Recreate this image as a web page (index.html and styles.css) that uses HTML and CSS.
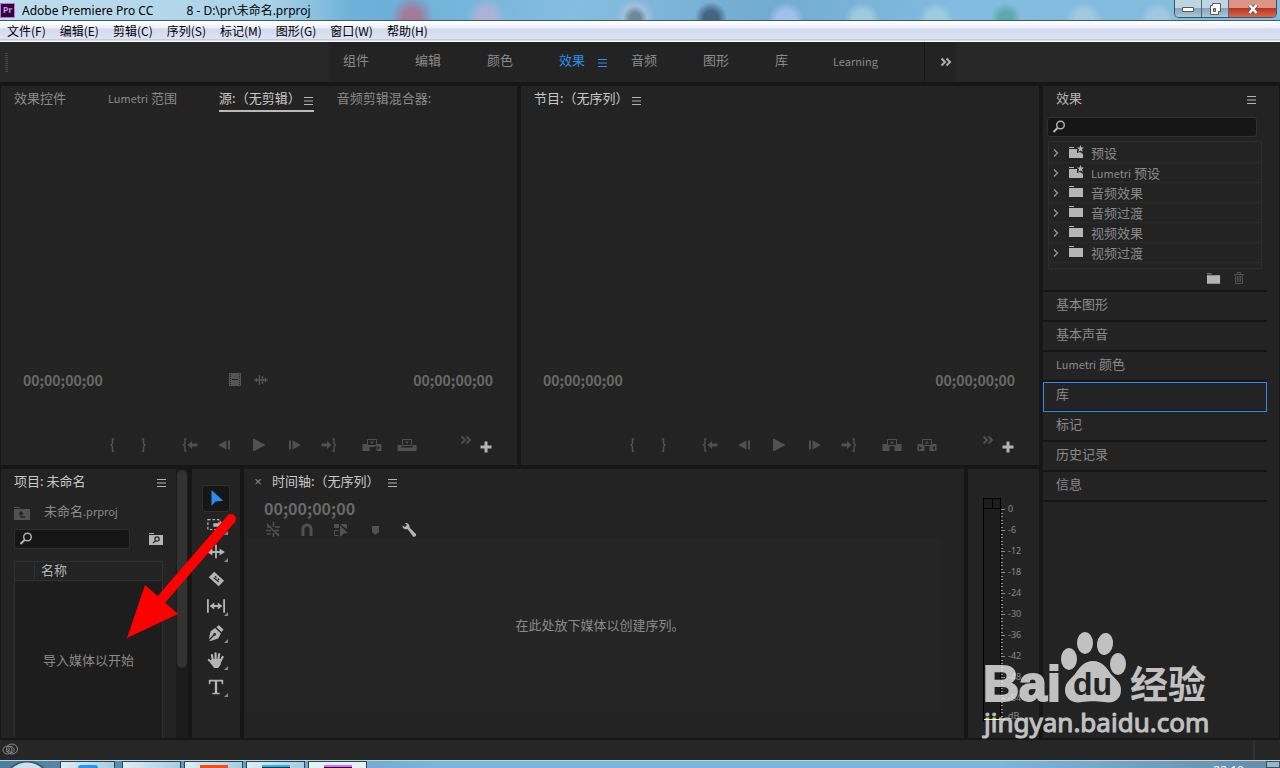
FILE: index.html
```html
<!DOCTYPE html>
<html lang="zh-Hans">
<head>
  <meta charset="UTF-8">
  <title>Adobe Premiere Pro CC</title>
  <link rel="stylesheet" href="styles.css">
</head>
<body>
  <svg class="sprite" aria-hidden="true">
    <symbol id="i-menu" viewBox="0 0 10 8"><path d="M0 .5h9M0 4h9M0 7.5h9" stroke="currentColor"/></symbol>
    <symbol id="i-more" viewBox="0 0 12 10"><path d="M1.5 1.5L5 5 1.5 8.500M6.500 1.500L10 5l-3.500 3.500" fill="none" stroke="currentColor" stroke-width="2"/></symbol>
    <symbol id="i-search" viewBox="0 0 14 14"><circle cx="8.5" cy="5" r="3.8" fill="none" stroke="currentColor" stroke-width="1.4"/><path d="M5.5 8l-4 4" stroke="currentColor" stroke-width="2"/></symbol>
    <symbol id="i-chev" viewBox="0 0 6 10"><path d="M1 1.500L4.500 5 1 8.500" fill="none" stroke="currentColor" stroke-width="1.3"/></symbol>
    <symbol id="i-folder" viewBox="0 0 15 12"><path d="M0 0h5v1H0zM0 2h14v9H0z" fill="currentColor"/></symbol>
    <symbol id="i-preset" viewBox="0 0 15 14"><path d="M0 2h5v1H0zM0 4h8v4l3-1 3 2v4H0z" fill="currentColor"/><path d="M11.500 0l1 2.500h2.500l-2 1.800.8 2.700-2.300-1.500L9.200 7l.8-2.700-2-1.800h2.500z" fill="currentColor"/></symbol>
    <symbol id="i-trash" viewBox="0 0 12 14"><path d="M1 2.500h10M4.500 2V.5h3V2M2.500 3v8.500h7V3M4.500 4v6M6 4v6M7.500 4v6" fill="none" stroke="currentColor"/></symbol>
    <symbol id="i-film" viewBox="0 0 12 14"><path d="M0 0h12v13H0z" fill="currentColor"/><path d="M1.500 1v12M10.500 1v12" stroke="#232323" stroke-dasharray="1 1"/><path d="M3 6.500h6" stroke="#232323"/></symbol>
    <symbol id="i-wave" viewBox="0 0 14 10"><path d="M0 5h14M2.500 3v4M5.500 0v10M8.500 1v8M11.500 3v4" stroke="currentColor" stroke-width="1.3"/></symbol>
    <symbol id="i-in" viewBox="0 0 20 14"><path d="M12 1h-1.500v4.500L9 7l1.500 1.500V13H12" fill="none" stroke="currentColor" stroke-width="1.5"/></symbol>
    <symbol id="i-out" viewBox="0 0 20 14"><path d="M8 1h1.500v4.500L11 7 9.500 8.500V13H8" fill="none" stroke="currentColor" stroke-width="1.5"/></symbol>
    <symbol id="i-goin" viewBox="0 0 20 14"><path d="M6.500 1H5v4.500L3.500 7 5 8.500V13h1.500" fill="none" stroke="currentColor" stroke-width="1.5"/><path d="M7.500 7L12 3v2.500h5.500v3H12V11z" fill="currentColor"/></symbol>
    <symbol id="i-goout" viewBox="0 0 20 14"><path d="M12.500 1H14v4.500L15.500 7 14 8.500V13h-1.500" fill="none" stroke="currentColor" stroke-width="1.5"/><path d="M11.500 7L7 3v2.500H1.500v3H7V11z" fill="currentColor"/></symbol>
    <symbol id="i-back" viewBox="0 0 20 14"><path d="M3 7l8.500-4.500v9zM13 2.500h2v9h-2z" fill="currentColor"/></symbol>
    <symbol id="i-fwd" viewBox="0 0 20 14"><path d="M16 7L7.500 2.500v9zM4 2.500h2v9H4z" fill="currentColor"/></symbol>
    <symbol id="i-play" viewBox="0 0 20 14"><path d="M3 1h1.500L15.500 7 4.500 13H3z" fill="currentColor"/></symbol>
    <symbol id="i-insert" viewBox="0 0 20 14"><path d="M.5 6h5v2h2v5h-7zM14.500 6h5v7h-5V8z" fill="currentColor"/><path d="M5.500 1.500h9v6h-9z" fill="none" stroke="currentColor"/><path d="M8 3.500h4L10 6zM7 8h6v1H7z" fill="currentColor"/><path d="M15.500 8v3.500l2.500-1.800z" fill="#232323"/></symbol>
    <symbol id="i-over" viewBox="0 0 20 14"><path d="M.5 7h4v2.500h11V7h4v6H.5z" fill="currentColor"/><path d="M5.500 1.500h9v6h-9z" fill="none" stroke="currentColor"/><path d="M8 3.500h4L10 6z" fill="currentColor"/></symbol>
    <symbol id="i-lift" viewBox="0 0 20 14"><path d="M.5 6h5v2h2v5h-7zM14.500 6h5v7h-7V8h2z" fill="currentColor"/><path d="M5.500 1.500h9v6h-9z" fill="none" stroke="currentColor"/><path d="M8 5.500h4L10 3z" fill="currentColor"/></symbol>
    <symbol id="i-extract" viewBox="0 0 20 14"><path d="M.5 6h5v2h2v5h-7zM14.500 6h5v7h-7V8h2z" fill="currentColor"/><path d="M5.500 1.500h9v6h-9z" fill="none" stroke="currentColor"/><path d="M8 5.500h4L10 3z" fill="currentColor"/><path d="M2 8v4l3-2zM18 8v4l-3-2z" fill="#232323"/></symbol>
    <symbol id="i-plus" viewBox="0 0 12 12"><path d="M6 .5v11M.5 6h11" stroke="currentColor" stroke-width="3"/></symbol>
    <symbol id="i-up" viewBox="0 0 16 13"><path d="M0 0h6v1H0zM0 2h16v11H0z" fill="currentColor"/><path d="M7 5v5h4M5 7.500L7 5l2 2.500" fill="none" stroke="#232323" stroke-width="1.3"/></symbol>
    <symbol id="i-find" viewBox="0 0 14 12"><path d="M0 0h5v1H0zM0 2h14v10H0z" fill="currentColor"/><circle cx="8" cy="6" r="2.2" fill="none" stroke="#232323" stroke-width="1.2"/><path d="M6.500 8L4 10" stroke="#232323" stroke-width="1.3"/></symbol>
    <symbol id="t-select" viewBox="0 0 20 20"><path d="M5 1v18l4.500-5 8.500-1z" fill="#2d8ceb"/></symbol>
    <symbol id="t-track" viewBox="0 0 20 20"><path d="M1 4h12v11H1z" fill="none" stroke="currentColor" stroke-width="1.3" stroke-dasharray="3 2"/><path d="M7 8h7V5l6 5-6 5v-3H7z" fill="currentColor"/></symbol>
    <symbol id="t-ripple" viewBox="0 0 20 20"><path d="M10 2v15" stroke="currentColor" stroke-width="2"/><path d="M0 10l6-4v3h8V6l6 4-6 4v-3H6v3z" fill="currentColor"/></symbol>
    <symbol id="t-razor" viewBox="0 0 20 20"><path d="M8 2l11 10-6 6L2 8z" fill="currentColor"/><path d="M7.500 8.500l5.500 4.500M9 7l1.500 1.500M12 9.500l1.500 1.500" stroke="#232323" stroke-width="1.4"/></symbol>
    <symbol id="t-slip" viewBox="0 0 20 20"><path d="M1 2.500v15M19 2.500v15M5 10h10" stroke="currentColor" stroke-width="2"/><path d="M3 10l5-4v8zM17 10l-5-4v8z" fill="currentColor"/></symbol>
    <symbol id="t-pen" viewBox="0 0 20 20"><path d="M13 1l5.500 5.500L16 9l-5.500-5.500zM9 4.500l6.500 6L12.500 16 4 19l-1.500-.5L8 13a1.500 1.500 0 1 0-1-1l-5 5L4 8z" fill="currentColor"/></symbol>
    <symbol id="t-hand" viewBox="0 0 20 20"><path d="M6.500 11l-1-6.500M9.500 10V2.500M12.500 10l1-6.500M15 11l2.500-4.500M7 14l-5-4" fill="none" stroke="currentColor" stroke-width="2.4" stroke-linecap="round"/><path d="M5.400 9h10.800l-1 6-2.700 4H8l-4.500-6z" fill="currentColor"/></symbol>
    <symbol id="t-type" viewBox="0 0 20 20"><path d="M2 2h16v5h-1.500L16 4h-4.700v12.500H14V18H6v-1.500h2.700V4H4l-.5 3H2z" fill="currentColor"/></symbol>
    <symbol id="l-nest" viewBox="0 0 16 16"><path d="M2 2l12 12M8.500 0v5M2 5h4M10 5h5M1 8.500h5M10 8.500h4M2 12h4M11 12h3M8.500 11v4" stroke="currentColor" stroke-width="1.5"/></symbol>
    <symbol id="l-snap" viewBox="0 0 16 16"><path d="M4 14V7a4 4 0 0 1 8 0v7" fill="none" stroke="currentColor" stroke-width="3"/></symbol>
    <symbol id="l-link" viewBox="0 0 16 16"><path d="M1 2h5v4H1zM8 2h6v5L8 3zM7 3.500L15 11l-4 .5L7 15z" fill="currentColor"/><path d="M5.500 8.500h-4v5h4" fill="none" stroke="currentColor"/></symbol>
    <symbol id="l-mark" viewBox="0 0 16 16"><path d="M5 4h7v6l-3.500 3L5 10z" fill="currentColor"/></symbol>
    <symbol id="l-wrench" viewBox="0 0 16 16"><path d="M4 1l2 2-2 2-2.500-1.500C1 6 4 8 6.500 7l6 8L15 14v-2L8.500 5.500C9 2.500 6.500.5 4 1z" fill="currentColor"/></symbol>
  </svg>

  <header class="titlebar">
    <span class="app-icon">Pr</span>
    <h1>Adobe Premiere Pro CC <span class="doc">8 - D:\pr\未命名.prproj</span></h1>
    <div class="win-buttons">
      <button aria-label="最小化"><svg width="14" height="12"><path d="M1.500 4.500h11v4h-11z" fill="#fff" stroke="#52586b"/></svg></button>
      <button aria-label="还原"><svg width="14" height="14"><path d="M4.500 1.500h8v8h-2v3h-8v-9h2z" fill="#fff" stroke="#52586b"/><path d="M5.500 6.500h2v3h-2z" fill="#8fb0c8" stroke="#52586b"/></svg></button>
      <button class="close" aria-label="关闭"><svg width="14" height="12"><path d="M3.500 2l7 8M10.500 2l-7 8" stroke="#52586b" stroke-width="4"/><path d="M3.500 2l7 8M10.500 2l-7 8" stroke="#fff" stroke-width="2.5"/></svg></button>
    </div>
  </header>

  <nav class="menubar">
    <a href="#">文件(F)</a><a href="#">编辑(E)</a><a href="#">剪辑(C)</a><a href="#">序列(S)</a><a href="#">标记(M)</a><a href="#">图形(G)</a><a href="#">窗口(W)</a><a href="#">帮助(H)</a>
  </nav>

  <nav class="workspaces">
    <span class="grip"></span>
    <div class="ws-list">
      <button>组件</button>
      <button>编辑</button>
      <button>颜色</button>
      <button class="on">效果 <svg class="burger"><use href="#i-menu"/></svg></button>
      <button>音频</button>
      <button>图形</button>
      <button>库</button>
      <button class="latin">Learning</button>
    </div>
    <button class="ws-more" aria-label="更多"><svg width="12" height="10"><use href="#i-more"/></svg></button>
  </nav>

  <main>
    <div class="work">
      <div class="monitors">
        <section class="panel monitor">
          <div class="tabs">
            <button>效果控件</button>
            <button><small>Lumetri</small> 范围</button>
            <button class="on underline">源:（无剪辑）<svg class="burger"><use href="#i-menu"/></svg></button>
            <button>音频剪辑混合器:</button>
          </div>
          <div class="times">
            <span class="timecode">00;00;00;00</span>
            <span class="media"><svg width="12" height="14"><use href="#i-film"/></svg><svg width="14" height="10"><use href="#i-wave"/></svg></span>
            <span class="timecode">00;00;00;00</span>
          </div>
          <div class="transport">
            <div class="marks">
              <button aria-label="标记入点"><svg><use href="#i-in"/></svg></button>
              <button aria-label="标记出点"><svg><use href="#i-out"/></svg></button>
            </div>
            <div class="play">
              <button aria-label="转到入点"><svg><use href="#i-goin"/></svg></button>
              <button aria-label="后退一帧"><svg><use href="#i-back"/></svg></button>
              <button aria-label="播放"><svg><use href="#i-play"/></svg></button>
              <button aria-label="前进一帧"><svg><use href="#i-fwd"/></svg></button>
              <button aria-label="转到出点"><svg><use href="#i-goout"/></svg></button>
            </div>
            <div class="edit">
              <button aria-label="插入"><svg><use href="#i-insert"/></svg></button>
              <button aria-label="覆盖"><svg><use href="#i-over"/></svg></button>
            </div>
            <div class="extra">
              <button class="more" aria-label="更多"><svg><use href="#i-more"/></svg></button>
              <button class="add" aria-label="按钮编辑器"><svg><use href="#i-plus"/></svg></button>
            </div>
          </div>
        </section>

        <section class="panel monitor">
          <div class="tabs">
            <button class="on">节目:（无序列）<svg class="burger"><use href="#i-menu"/></svg></button>
          </div>
          <div class="times">
            <span class="timecode">00;00;00;00</span>
            <span class="timecode">00;00;00;00</span>
          </div>
          <div class="transport">
            <div class="marks">
              <button aria-label="标记入点"><svg><use href="#i-in"/></svg></button>
              <button aria-label="标记出点"><svg><use href="#i-out"/></svg></button>
            </div>
            <div class="play">
              <button aria-label="转到入点"><svg><use href="#i-goin"/></svg></button>
              <button aria-label="后退一帧"><svg><use href="#i-back"/></svg></button>
              <button aria-label="播放"><svg><use href="#i-play"/></svg></button>
              <button aria-label="前进一帧"><svg><use href="#i-fwd"/></svg></button>
              <button aria-label="转到出点"><svg><use href="#i-goout"/></svg></button>
            </div>
            <div class="edit">
              <button aria-label="提升"><svg><use href="#i-lift"/></svg></button>
              <button aria-label="提取"><svg><use href="#i-extract"/></svg></button>
            </div>
            <div class="extra">
              <button class="more" aria-label="更多"><svg><use href="#i-more"/></svg></button>
              <button class="add" aria-label="按钮编辑器"><svg><use href="#i-plus"/></svg></button>
            </div>
          </div>
        </section>
      </div>

      <div class="bottom">
        <section class="panel project">
          <div class="project-body">
            <div class="panel-head"><h2>项目: 未命名</h2><svg class="burger"><use href="#i-menu"/></svg></div>
            <div class="file"><svg width="16" height="13"><use href="#i-up"/></svg><span>未命名<small>.prproj</small></span></div>
            <div class="find">
              <label class="search"><svg><use href="#i-search"/></svg><input type="text" aria-label="搜索素材箱"></label>
              <svg width="14" height="12"><use href="#i-find"/></svg>
            </div>
            <table class="bin">
              <thead><tr><th class="tag"></th><th>名称</th></tr></thead>
              <tbody><tr><td colspan="2">导入媒体以开始</td></tr></tbody>
            </table>
          </div>
          <div class="scroll"><div class="thumb"></div></div>
        </section>

        <section class="panel tools">
          <button class="on" aria-label="选择工具"><svg><use href="#t-select"/></svg></button>
          <button class="sub" aria-label="轨道选择"><svg><use href="#t-track"/></svg></button>
          <button class="sub" aria-label="波纹编辑"><svg><use href="#t-ripple"/></svg></button>
          <button aria-label="剃刀"><svg><use href="#t-razor"/></svg></button>
          <button class="sub" aria-label="外滑"><svg><use href="#t-slip"/></svg></button>
          <button class="sub" aria-label="钢笔"><svg><use href="#t-pen"/></svg></button>
          <button class="sub" aria-label="手形"><svg><use href="#t-hand"/></svg></button>
          <button class="sub" aria-label="文字"><svg><use href="#t-type"/></svg></button>
        </section>

        <section class="panel timeline">
          <div class="tl-head"><button class="x" aria-label="关闭">×</button><h2>时间轴:（无序列）</h2><svg class="burger"><use href="#i-menu"/></svg></div>
          <div class="timecode big">00;00;00;00</div>
          <div class="tl-tools">
            <button aria-label="嵌套"><svg><use href="#l-nest"/></svg></button>
            <button aria-label="对齐"><svg><use href="#l-snap"/></svg></button>
            <button aria-label="链接选择"><svg><use href="#l-link"/></svg></button>
            <button aria-label="添加标记"><svg><use href="#l-mark"/></svg></button>
            <button class="lit" aria-label="显示设置"><svg><use href="#l-wrench"/></svg></button>
          </div>
          <div class="drop">在此处放下媒体以创建序列。</div>
        </section>

        <section class="panel meter">
          <div class="bar"><i></i></div>
          <svg class="ticks" width="4" height="214">
            <defs><pattern id="tick" width="4" height="21" patternUnits="userSpaceOnUse"><path d="M0 .5h4M0 4.500h2M0 7.500h2M0 11.500h2M0 14.500h2M0 18.500h2" stroke="#8a8a8a"/></pattern></defs>
            <rect width="4" height="214" fill="url(#tick)"/>
          </svg>
          <ul>
            <li>0</li><li>-6</li><li>-12</li><li>-18</li><li>-24</li><li>-30</li><li>-36</li><li>-42</li><li>-48</li><li>-54</li><li class="db">dB</li>
          </ul>
        </section>
      </div>
    </div>

    <aside class="panel side">
      <div class="panel-head"><h2>效果</h2><svg class="burger"><use href="#i-menu"/></svg></div>
      <label class="search"><svg><use href="#i-search"/></svg><input type="text" aria-label="搜索效果"></label>
      <ul class="tree">
        <li><svg class="chev"><use href="#i-chev"/></svg><svg class="ico"><use href="#i-preset"/></svg>预设</li>
        <li><svg class="chev"><use href="#i-chev"/></svg><svg class="ico"><use href="#i-preset"/></svg><span><small>Lumetri</small> 预设</span></li>
        <li><svg class="chev"><use href="#i-chev"/></svg><svg class="ico"><use href="#i-folder"/></svg>音频效果</li>
        <li><svg class="chev"><use href="#i-chev"/></svg><svg class="ico"><use href="#i-folder"/></svg>音频过渡</li>
        <li><svg class="chev"><use href="#i-chev"/></svg><svg class="ico"><use href="#i-folder"/></svg>视频效果</li>
        <li><svg class="chev"><use href="#i-chev"/></svg><svg class="ico"><use href="#i-folder"/></svg>视频过渡</li>
      </ul>
      <div class="tree-foot">
        <button aria-label="新建文件夹"><svg width="14" height="12"><use href="#i-folder"/></svg></button>
        <button class="off" aria-label="删除"><svg width="12" height="14"><use href="#i-trash"/></svg></button>
      </div>
      <div class="stack">
        <button>基本图形</button>
        <button>基本声音</button>
        <button><small>Lumetri</small> 颜色</button>
        <button class="focus">库</button>
        <button>标记</button>
        <button>历史记录</button>
        <button>信息</button>
      </div>
    </aside>
  </main>

  <footer class="status">
    <svg width="17" height="14" viewBox="0 0 17 14" fill="none" stroke="#8a8a8a"><ellipse cx="5.5" cy="8" rx="4.500" ry="4"/><ellipse cx="10" cy="7" rx="5.500" ry="5"/><path d="M4 9.500c2 1 4-1 3-3s2-3 4-1 1 5-1 5-3-2-4.500-3"/></svg>
  </footer>

  <div class="taskbar">
    <span class="start"></span>
    <button aria-label="浏览器"><i class="blue"></i></button>
    <button aria-label="资源管理器"></button>
    <button aria-label="WPS"><i class="orange"></i></button>
    <button aria-label="应用"><i class="cyan"></i></button>
    <button class="active" aria-label="Premiere Pro"><i class="pink"></i></button>
    <time>22:10</time>
    <span class="desk"></span>
  </div>

  <svg class="arrow" width="112" height="130" viewBox="0 0 112 130" aria-hidden="true"><path d="M105 9L34 91" stroke="red" stroke-width="10" stroke-linecap="round"/><path d="M1 128l18-53 33 29z" fill="red"/></svg>

  <svg class="watermark" width="236" height="116" viewBox="0 0 236 116" aria-label="Baidu 经验">
    <g fill="#fff" opacity=".72">
      <text class="bai" x="3" y="71">Bai</text>
      <ellipse cx="89" cy="29" rx="8" ry="11"/>
      <ellipse cx="105" cy="13" rx="8" ry="11"/>
      <ellipse cx="125" cy="14" rx="8" ry="11" transform="rotate(8 125 14)"/>
      <ellipse cx="138" cy="34" rx="8" ry="11"/>
      <path d="M113 31c9 0 14 7 18 13 4 5 10 8 10 16 0 10-8 14-17 12-8-1-14-1-22 0-9 2-17-3-17-12 0-8 6-11 10-16 4-6 9-13 18-13z"/>
      <text class="jy" x="150" y="68">经验</text>
      <text class="url" x="4" y="102">jingyan.baidu.com</text>
    </g>
    <text class="du" x="93" y="65">du</text>
  </svg>
</body>
</html>
```
FILE: styles.css
```css
* { box-sizing: border-box; }

body {
  margin: 0;
  height: 100vh;
  overflow: hidden;
  position: relative;
  display: flex;
  flex-direction: column;
  background: #161616;
  color: #8a8a8a;
  font: 13px/20px "Noto Sans CJK SC", sans-serif;
}

h1, h2, ul { margin: 0; padding: 0; font-size: 13px; font-weight: 400; }
ul { list-style: none; }
button {
  border: 0;
  padding: 0;
  background: none;
  color: inherit;
  font: inherit;
  white-space: nowrap;
}
small { font-size: 11px; }
svg { flex: none; }
.sprite { position: absolute; width: 0; height: 0; }
.burger { width: 10px; height: 8px; color: #b4b4b4; }

/* window frame */
.titlebar {
  flex: none;
  height: 21px;
  display: flex;
  align-items: flex-start;
  border-bottom: 1px solid #44586a;
  color: #000;
  background:
    linear-gradient(90deg, rgba(205,230,242,.75) 0, rgba(205,230,242,.6) 270px, transparent 350px),
    radial-gradient(circle at 412px 18px, rgba(184,98,126,.7) 8px, transparent 22px),
    radial-gradient(circle at 486px 18px, rgba(183,176,214,.8) 9px, transparent 20px),
    radial-gradient(circle at 635px 18px, #6f8799 5px, #a0bfe0 12px, transparent 20px),
    radial-gradient(circle at 711px 18px, rgba(54,82,106,.8) 7px, transparent 16px),
    radial-gradient(circle at 786px 20px, rgba(165,195,238,.9) 9px, transparent 18px),
    radial-gradient(circle at 862px 20px, rgba(169,208,224,.8) 9px, transparent 18px),
    radial-gradient(circle at 936px 20px, rgba(165,208,220,.8) 9px, transparent 18px),
    radial-gradient(circle at 1006px 18px, rgba(80,165,155,.8) 6px, transparent 15px),
    radial-gradient(circle at 1084px 20px, rgba(170,203,226,.8) 9px, transparent 18px),
    radial-gradient(circle at 1158px 20px, rgba(170,203,226,.8) 9px, transparent 18px),
    linear-gradient(100deg, #8fc0dc, #6cb0d8 30%, #85bde0 45%, #72abd0 60%, #82bce0 75%, #84bcdc);
}
.app-icon {
  width: 15px;
  height: 15px;
  margin: 3px 7px 0 0;
  border: 1px solid #c86ee0;
  background: #2a0634;
  color: #dd83f5;
  font: bold 9px/12px "Open Sans", sans-serif;
  text-align: center;
}
.titlebar h1 { font: 12px/22px "Noto Sans", "Noto Sans CJK SC", sans-serif; height: 20px; flex: 1; }
.titlebar .doc { margin-left: 30px; }
.win-buttons {
  display: flex;
  height: 18px;
  margin-right: 3px;
  border: 1px solid #3f5061;
  border-top: 0;
  border-radius: 0 0 5px 5px;
  overflow: hidden;
}
.win-buttons button {
  width: 27px;
  display: flex;
  justify-content: center;
  align-items: center;
  border-right: 1px solid #50667a;
  background: linear-gradient(#c0d5e2 45%, #86a5ba 50%, #a9c8d8);
}
.win-buttons .close { width: 47px; border: 0; background: linear-gradient(#dc9484 45%, #bb3620 50%, #d9654a); }

.menubar {
  flex: none;
  height: 21px;
  display: flex;
  gap: 14px;
  padding-left: 7px;
  background: linear-gradient(#fff, #eceff8 7px, #d3daed 8px, #dee3f5 18px, #b0b5ca 19px, #fff 20px);
}
.menubar a { color: #000; text-decoration: none; font-size: 12px; line-height: 20px; }

.workspaces {
  flex: none;
  height: 40px;
  display: flex;
  align-items: center;
  background: #272727;
}
.grip {
  width: 3px;
  height: 19px;
  margin-left: 5px;
  background: repeating-linear-gradient(#484848 0 1px, transparent 1px 2px);
}
.ws-list {
  display: flex;
  width: 595px;
  height: 40px;
  margin-left: 322px;
  padding-left: 13px;
  background: #232323;
  border-right: 1px solid #161616;
}
.ws-list button { width: 72px; text-align: left; padding-bottom: 4px; font-size: 13px; }
.ws-list .latin { font-size: 11px; width: 56px; padding-bottom: 3px; margin-left: -14px; }
.ws-list .on { color: #2d8ceb; }
.ws-list .burger { color: #2d8ceb; margin-left: 10px; vertical-align: -2px; }
.ws-more { height: 40px; width: 30px; padding: 0 0 0 12px; background: #232323; color: #b0b0b0; }

/* panels */
main { flex: 1; min-height: 0; display: flex; gap: 4px; padding: 4px 1px 2px; }
.work { flex: 1; min-width: 0; display: flex; flex-direction: column; gap: 4px; }
.monitors { flex: 379 1 0; display: grid; grid-template-columns: 516fr 518fr; gap: 4px; min-height: 0; }
.bottom { flex: 269 1 0; display: grid; grid-template-columns: 187px 48px 1fr 71px; gap: 4px; min-height: 0; }
.panel { background: #232323; min-width: 0; min-height: 0; }
.panel-head { display: flex; justify-content: space-between; align-items: center; color: #b4b4b4; }

.monitor { display: flex; flex-direction: column; }
.tabs { display: flex; flex: 1; align-items: flex-start; padding: 2px 13px; }
.tabs button { height: 24px; line-height: 20px; padding-bottom: 4px; margin-right: 23px; border-bottom: 0 solid #b9b9b9; }
.tabs button:first-child, .tabs button:nth-child(2) { margin-right: 42px; }
.tabs .on { color: #c8c8c8; }
.tabs .underline { padding-bottom: 2px; border-bottom-width: 2px; }
.tabs .burger { margin-left: 3px; vertical-align: -2px; }
.times { display: flex; justify-content: space-between; align-items: center; padding: 0 24px 0 22px; }
.timecode { font-size: 14px; font-weight: 700; color: #686868; }
.timecode.big { font-size: 16px; padding: 3px 0 0 20px; line-height: 24px; }
.media { display: flex; align-items: center; gap: 13px; margin-right: 20px; color: #555; }

.transport { display: flex; align-items: center; height: 40px; margin: 35px 0 0; padding: 0 25px 0 95px; color: #505050; }
.transport > div { display: flex; }
.transport button { width: 35px; height: 20px; display: flex; justify-content: center; align-items: center; }
.transport .marks button { width: 32px; }
.transport .play { margin-left: 12px; }
.transport .edit { margin-left: 7px; }
.transport svg { width: 20px; height: 14px; }
.transport .extra { margin-left: auto; align-items: flex-start; gap: 8px; margin-top: -4px; }
.transport .extra button { width: 12px; height: 12px; }
.transport .extra svg { width: 12px; height: 10px; }
.transport .extra .add { color: #b4b4b4; margin-top: 7px; }
.transport .add svg { height: 12px; }

.project { display: flex; justify-content: space-between; }
.project-body { width: 149px; margin-left: 13px; display: flex; flex-direction: column; }
.project .panel-head { padding: 2px 0; }
.project .panel-head h2 { color: #c8c8c8; }
.project .burger { margin: 4px -4px 0 0; }
.file { display: flex; align-items: center; gap: 14px; margin: 8px 0; color: #8a8a8a; }
.file svg { color: #515151; margin-top: 4px; }
.find { display: flex; justify-content: space-between; align-items: center; color: #b4b4b4; }
.find .search { width: 116px; }
.search {
  display: flex;
  align-items: center;
  height: 20px;
  padding-left: 4px;
  border: 1px solid #303030;
  border-radius: 3px;
  background: #161616;
  color: #b4b4b4;
}
.search svg { width: 14px; height: 14px; }
.search input { flex: 1; min-width: 0; border: 0; background: none; color: #c8c8c8; outline: 0; }
.bin { flex: 1; display: flex; flex-direction: column; margin-top: 12px; border: 1px solid #303030; border-bottom: 0; background: #1d1d1d; }
.bin thead { background: #232323; border-bottom: 1px solid #303030; }
.bin thead tr { display: flex; height: 18px; }
.bin th { padding: 0 6px; font-weight: 400; color: #b4b4b4; line-height: 16px; }
.bin .tag { width: 20px; border-right: 1px solid #303030; }
.bin tbody, .bin tbody tr { flex: 1; display: flex; }
.bin td { flex: 1; display: flex; align-items: center; justify-content: center; padding: 0; }
.scroll { width: 12px; padding: 1px; background: #1b1b1b; }
.thumb { height: 74%; border-radius: 5px; background: #323232; }

.tools { display: flex; flex-direction: column; align-items: center; padding-top: 16px; color: #b4b4b4; }
.tools button { width: 28px; height: 27px; display: flex; align-items: center; justify-content: center; position: relative; border: 1px solid transparent; border-radius: 3px; padding-bottom: 2px; }
.tools svg { width: 18px; height: 18px; }
.tools .on { background: #161616; border-color: #303030; }
.tools .sub::after { content: ""; position: absolute; right: 1px; bottom: 3px; border: 2px solid; border-color: transparent #8a8a8a #8a8a8a transparent; }

.timeline { display: flex; flex-direction: column; }
.tl-head { display: flex; align-items: center; padding: 2px 10px; color: #c8c8c8; }
.tl-head .x { width: 8px; margin-right: 10px; padding-top: 2px; color: #8a8a8a; font: 13px/18px "Liberation Sans", sans-serif; }
.tl-head .burger { margin: 4px 0 0 8px; }
.tl-tools { display: flex; gap: 18px; padding: 2px 21px 0; color: #505050; }
.tl-tools button, .tl-tools svg { display: block; width: 16px; height: 16px; }
.tl-tools .lit { color: #b4b4b4; }
.drop { flex: 1; display: flex; align-items: center; justify-content: center; margin: 0 24px 26px 2px; padding-left: 14px; background: #252525; }

.meter { display: flex; padding: 29px 0 0 15px; }
.bar { width: 18px; height: 224px; border: 1px solid #000; border-bottom: 0; background: linear-gradient(#000, #000) 8px 0 / 1px 9px no-repeat, linear-gradient(#000, #000) 0 9px / 100% 1px no-repeat, #1d1d1d; display: flex; align-items: flex-end; }
.bar i { width: 16px; height: 1px; margin-bottom: 2px; background: #ffff30; }
.ticks { margin-top: 11px; }
.meter ul { padding-left: 3px; }
.meter li { height: 21px; font: 9px/22px "Noto Sans", sans-serif; }
.meter .db { margin-top: -3px; }

.side { width: 236px; }
.side .panel-head { padding: 2px 22px 0 13px; }
.side .burger { margin-top: 4px; }
.side .search { margin: 9px 22px 4px 4px; }
.tree { margin: 0 17px 0 5px; padding: 1px 0 5px; border: 1px solid #2e2e2e; }
.tree li { display: flex; align-items: center; height: 20px; border-bottom: 1px solid #2a2a2a; }
.tree .chev { width: 6px; height: 10px; margin: 0 10px 0 4px; color: #999; }
.tree .ico { width: 15px; height: 14px; margin: -2px 7px 0 0; color: #b4b4b4; }
.tree-foot { display: flex; justify-content: flex-end; align-items: center; height: 21px; padding-bottom: 1px; gap: 12px; padding-right: 34px; }
.tree-foot button { display: flex; color: #b4b4b4; }
.tree-foot .off { color: #505050; }
.stack { margin-right: 12px; border-bottom: 2px solid #161616; }
.stack button { display: block; width: 100%; height: 30px; padding: 0 13px 4px; border: 0 solid #161616; border-top-width: 2px; text-align: left; }
.stack .focus { position: relative; }
.stack .focus::after { content: ""; position: absolute; inset: 0 0 -2px; border: 1px solid #2d8ceb; }

.status { flex: none; height: 20px; display: flex; align-items: center; padding: 0 26px 2px 2px; background: linear-gradient(#323232, #323232) calc(100% - 25px) 0 / 2px 20px no-repeat, #262626; }

.taskbar { flex: none; height: 8px; display: flex; gap: 3px; overflow: hidden; border-top: 1px solid #bcd3e0; background: linear-gradient(90deg, #4f7d9c, #7db6da 35%, #7db6da 78%, #658ba8); }
.taskbar .start { width: 57px; background: radial-gradient(circle at 27px 24px, #d0dfe8 22px, #26506e 23px, transparent 25px); }
.taskbar button { width: 59px; height: 7px; display: flex; justify-content: center; align-items: flex-end; border: 1px solid #24485f; border-bottom: 0; background: linear-gradient(120deg, #e3edf3, #a6cbdf); }
.taskbar button:nth-child(2) { width: 55px; margin-right: 4px; }
.taskbar .active { background: #e9f1f5; }
.taskbar i { width: 28px; height: 3px; }
.taskbar .blue { width: 20px; background: #2a93ec; border-radius: 10px 10px 0 0; }
.orange { background: #f64c18; }
.cyan { background: linear-gradient(#08c0f4 2px, #12222c 2px); }
.pink { background: linear-gradient(#db6ff0 2px, #2a0634 2px); }
.taskbar time { margin-left: auto; color: #fff; font: 12px/14px "Noto Sans", sans-serif; padding-top: 3px; }
.taskbar .desk { width: 14px; margin-left: 19px; border: 1px solid #33536a; background: #9bb5c6; }

/* overlays */
.arrow { position: absolute; left: 126px; top: 510px; }
.watermark { position: absolute; right: 64px; bottom: 22px; overflow: visible; }
.bai { font: bold 50px "Liberation Sans", sans-serif; stroke: #fff; stroke-width: 2px; }
.jy { font: bold 38px "Noto Sans CJK SC", sans-serif; }
.url { font: 26px "Noto Sans", sans-serif; stroke: #fff; stroke-width: 1px; }
.du { font: bold 32px "Liberation Sans", sans-serif; fill: #232323; }
```
